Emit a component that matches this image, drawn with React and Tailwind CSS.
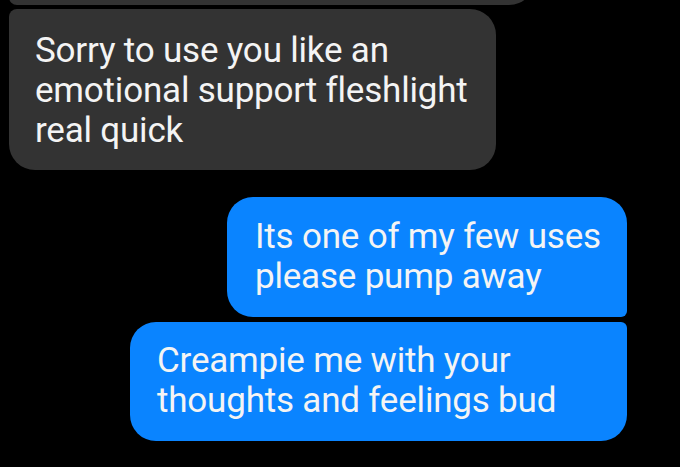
export default function App() {
  const font = { fontFamily: 'Roboto, "Noto Sans", sans-serif' };
  return (
    <div className="w-[680px] h-[467px] bg-black overflow-hidden flex flex-col" style={font}>
      <div className="ml-[9px] mt-[-40px] w-[526px] h-[45px] bg-[#333333] rounded-bl-[8px] rounded-br-[26px] shrink-0" />
      <div className="ml-[9px] mt-[4px] w-[487px] bg-[#333333] rounded-tl-[8px] rounded-tr-[26px] rounded-br-[26px] rounded-bl-[26px] pl-[26px] pr-[10px] pt-[22px] pb-[19px] text-[35px] leading-[40px] tracking-[-0.2px] text-[#f4f4f4] shrink-0">
        Sorry to use you like an<br />emotional support fleshlight<br />real quick
      </div>
      <div className="flex flex-col items-end pr-[53px] mt-[27px] gap-[5px]">
        <div className="w-[400px] bg-[#0a84ff] rounded-tl-[26px] rounded-tr-[26px] rounded-br-[6px] rounded-bl-[26px] pl-[28px] pr-[10px] pt-[20px] pb-[20px] text-[35px] leading-[40px] tracking-[-0.2px] text-[#f4f4f4]">
          Its one of my few uses<br />please pump away
        </div>
        <div className="w-[497px] bg-[#0a84ff] rounded-tl-[26px] rounded-tr-[6px] rounded-br-[26px] rounded-bl-[26px] pl-[27px] pr-[10px] pt-[19px] pb-[20px] text-[35px] leading-[40px] tracking-[-0.2px] text-[#f4f4f4]">
          Creampie me with your<br />thoughts and feelings bud
        </div>
      </div>
    </div>
  );
}
